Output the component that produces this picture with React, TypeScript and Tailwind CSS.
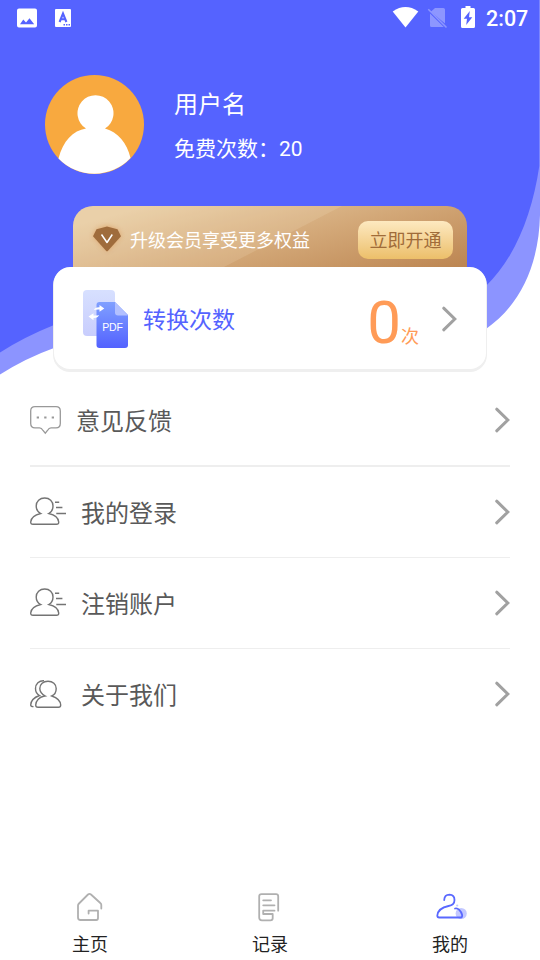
import type { ReactNode } from "react";

function HeaderBackground() {
  return (
    <svg className="absolute left-0 top-0 -z-10" width="540" height="376" viewBox="0 0 540 376" fill="none">
      <path d="M0 0H540V215C539 262 522 304 486 329C400 388 260 270 54 348Q26 358 0 374.500Z" fill="#8c94ff" />
      <path d="M0 0H539.300V166C532 216 514 259 486 286C400 350 250 250 54 325Q24 337 0 352.500Z" fill="#5563ff" />
    </svg>
  );
}

function StatusBar() {
  return (
    <div className="flex h-9 items-center text-white">
      <svg width="540" height="36" viewBox="0 0 540 36" className="-mr-[54px] shrink-0" fill="none">
        <path fillRule="evenodd" d="M19 8.500H35Q37 8.500 37 10.500V25.500Q37 27.500 35 27.500H19Q17 27.500 17 25.500V10.500Q17 8.500 19 8.500ZM20 24.200H34.200L29.500 18.200L26 22.500L23.300 19.600Z" fill="white" />
        <path d="M56 9H70Q71 9 71 10V26Q71 27 70 27H56Q55 27 55 26V10Q55 9 56 9Z" fill="white" />
        <path d="M59.600 22L63 13.500L66.400 22M60.700 19.300H65.300" stroke="#5563ff" strokeWidth="2.100" />
        <path d="M63.500 24.800H70" stroke="#5563ff" strokeWidth="1.400" strokeDasharray="1.500 1" />
        <path d="M392.700 11.500Q405.500 2.700 418.300 11.500L405.500 27.600Z" fill="white" />
        <path d="M435 8H443.300Q445 8 445 9.500V23.500L430.800 11.700ZM430 13.500L443.800 27H431.500Q430 27 430 25.500Z" fill="#8d96ff" />
        <path d="M428.300 9.200L446.500 27.500" stroke="#8d96ff" strokeWidth="1.500" />
        <path d="M465.500 6H470.500V8H473.500Q475 8 475 9.500V26.500Q475 28 473.500 28H462.500Q461 28 461 26.500V9.500Q461 8 462.500 8H465.500Z" fill="white" />
        <path d="M469.800 11L463.700 18.700H467L466.200 25L472.300 17.300H469Z" fill="#5563ff" />
      </svg>
      <span className="pt-0.5 font-[Roboto] text-[21.500px] font-medium leading-none">2:07</span>
    </div>
  );
}

function Avatar() {
  return (
    <svg width="99" height="99" viewBox="0 0 99 99" className="shrink-0">
      <circle cx="49.500" cy="49.500" r="49.500" fill="#f8a93f" />
      <path d="M13.500 83.500C18 66 28 55.500 41 53.500A18 18 0 1 1 60 53.500C73 57 82 68 85.500 83A49.500 49.500 0 0 1 13.500 83.500Z" fill="white" />
    </svg>
  );
}

function DiamondIcon() {
  return (
    <svg width="36" height="36" viewBox="0 0 36 36" className="shrink-0">
      <defs>
        <filter id="glow" x="-30%" y="-30%" width="160%" height="160%">
          <feGaussianBlur stdDeviation="2.5" />
        </filter>
      </defs>
      <path d="M4 14L8 7L18 4L28 7L32 14L18 29Z" fill="#d98e4c" opacity="0.6" filter="url(#glow)" />
      <path d="M7.500 7.300Q12 6 18 4.500Q24 6 28.500 7.300L32 14.200L19 28.700Q18 29.700 17 28.700L4 14.200Z" fill="#9f6c3c" />
      <path d="M12.500 12.500L18 20.500L23.300 12.500" fill="none" stroke="white" strokeWidth="1.500" strokeLinejoin="round" />
    </svg>
  );
}

function PdfIcon() {
  return (
    <svg width="46" height="58" viewBox="0 0 46 58" className="shrink-0" fill="none">
      <defs>
        <linearGradient id="pageBack" x1="0" y1="0" x2="0" y2="1">
          <stop stopColor="#d7e0ff" />
          <stop offset="1" stopColor="#c8cdfd" />
        </linearGradient>
        <linearGradient id="pageFront" x1="0" y1="0" x2="0" y2="1">
          <stop stopColor="#80a0ff" />
          <stop offset="1" stopColor="#5362ff" />
        </linearGradient>
      </defs>
      <rect width="32" height="46" rx="4" fill="url(#pageBack)" />
      <path d="M16.500 12H32L45 25V55Q45 58 42 58H16.500Q13.500 58 13.500 55V15Q13.500 12 16.500 12Z" fill="url(#pageFront)" />
      <path d="M32 12L45 25.500H35Q32 25.500 32 22.500Z" fill="#b2c0ff" />
      <path d="M11 20Q12 17 16.500 17.200V15L21.300 18.500L16.500 21.800V19.500Q13 19.300 11 20Z" fill="white" />
      <path d="M16 25Q15 28.200 10.500 28V30.300L5.500 26.500L10.500 23.200V25.500Q14 25.800 16 25Z" fill="white" />
      <text x="19.300" y="41.300" fill="white" fontSize="10.500" fontFamily="Liberation Sans, Arial, sans-serif" textLength="20.500">PDF</text>
    </svg>
  );
}

function Chevron() {
  return (
    <svg width="16" height="26" viewBox="0 0 16 26" fill="none" className="shrink-0">
      <path d="M2.700 2.200L13.800 13L2.700 23.800" stroke="#a1a1a1" strokeWidth="3" strokeLinecap="round" />
    </svg>
  );
}

function MessageIcon() {
  return (
    <svg width="31" height="30" viewBox="0 0 31 30" fill="none" className="shrink-0">
      <path d="M5 1.700H26Q30.300 1.700 30.300 6V18.500Q30.300 22.800 26 22.800H21Q19 22.800 17.500 25.500L15.300 28.200L13 25.500Q11.500 22.800 9.500 22.800H5Q.7 22.800 .7 18.500V6Q.7 1.700 5 1.700Z" stroke="#999" strokeWidth="1.300" />
      <path d="M6.700 12.500H9M14.200 12.500H16.500M21.700 12.500H24" stroke="#999" strokeWidth="2.200" />
    </svg>
  );
}

const personPath =
  "M10.700 16.500C7.500 14.800 6.200 12 6.200 9C6.200 4.300 9.800 1 14.700 1S23 4.300 23 9C23 12 21.500 15 18.800 16.500C25 18 28.500 21 28.700 25Q28.800 27.300 26.500 27.300H3Q.6 27.300 .7 25C1 21 4.500 18 10.700 16.500Z";

function LoginIcon() {
  return (
    <svg width="36" height="28" viewBox="0 0 36 28" fill="none" stroke="#747474" strokeWidth="1.400" className="-mt-0.5 shrink-0">
      <path d={personPath} />
      <path d="M25 5.300H29.200M26 10.500H32.400M26.300 16.500H36" />
    </svg>
  );
}

function PeopleIcon() {
  return (
    <svg width="32" height="28" viewBox="0 0 32 28" fill="none" stroke="#747474" strokeWidth="1.400" className="shrink-0">
      <path d="M15.300 16C11.500 14 9.800 11.500 9.800 8.500C9.800 4.200 13.200 1.200 18 1.200S26.200 4.200 26.200 8.500C26.200 12 24.500 14.800 21.800 16C27.500 18 30.500 21 30.700 25Q30.700 27.200 28.500 27.200H8Q5.700 27.200 5.700 25C5.900 20.500 9.500 17 13.700 16.300Z" />
      <path d="M14 .8C9 .5 5.500 4 5.500 8.500C5.500 11.500 7 14.200 9.500 15.500C4 17.500.8 21 .7 25Q.7 26.600 3.500 26.600" />
    </svg>
  );
}

function HomeIcon() {
  return (
    <svg width="30" height="32" viewBox="0 0 30 32" fill="none" stroke="#b0b0b0" strokeWidth="1.800" strokeLinecap="round" strokeLinejoin="round">
      <path d="M26.300 17.500V13.800Q26.300 12.800 25.300 12L16 3.500Q14.500 2.400 13 3.500L4 12.500Q3 13.500 3 14.500V26.500Q3 29 5.500 29H21.300Q23 29 23 27V19.700H13.600V22.500" />
    </svg>
  );
}

function RecordIcon() {
  return (
    <svg width="30" height="32" viewBox="0 0 30 32" fill="none" stroke="#b0b0b0" strokeWidth="1.800" strokeLinecap="round" strokeLinejoin="round">
      <path d="M23.200 19.700V5.300Q23.200 3.100 21 3.100H6.500Q4.200 3.100 4.200 5.300V26.500Q4.200 29.300 7 29.300H15.500Q17.700 29.300 17.700 27.300V23H8.200V19.700H19.500M8.200 9.300H16M8.200 14.300H19.500" />
    </svg>
  );
}

function MineIcon() {
  return (
    <svg width="34" height="32" viewBox="0 0 34 32" fill="none" strokeLinecap="round" strokeLinejoin="round" className="translate-x-[1px]">
      <circle cx="27.200" cy="22.500" r="5.600" fill="#c3c8ff" />
      <circle cx="23.200" cy="14.500" r="1.100" fill="#c3c8ff" />
      <path d="M10.200 9Q10.500 3.700 15.500 3.700Q20.500 3.900 20.500 9Q20.500 14 14.500 15C7 16.500 3.800 20 3.300 24.500Q3.300 26.500 5.200 26.500H26.500Q28.700 26.500 28 23.500C27 20 24 16.500 21 17.500" stroke="#5968ff" strokeWidth="1.800" />
    </svg>
  );
}

const menu: { label: string; icon: ReactNode; gap: string; border: string }[] = [
  { label: "意见反馈", icon: <MessageIcon />, gap: "gap-[15px]", border: "h-[92px] border-b-2" },
  { label: "我的登录", icon: <LoginIcon />, gap: "gap-[15px]", border: "h-[91px] border-b" },
  { label: "注销账户", icon: <LoginIcon />, gap: "gap-[15px]", border: "h-[91px] border-b" },
  { label: "关于我们", icon: <PeopleIcon />, gap: "gap-[19px]", border: "h-[90px]" },
];

const tabs: { label: string; icon: ReactNode }[] = [
  { label: "主页", icon: <HomeIcon /> },
  { label: "记录", icon: <RecordIcon /> },
  { label: "我的", icon: <MineIcon /> },
];

export default function App() {
  return (
    <div className="relative isolate flex h-[960px] w-[540px] flex-col overflow-hidden bg-white font-[Roboto,'Noto_Sans_CJK_SC',sans-serif]">
      <HeaderBackground />
      <StatusBar />

      {/* Profile */}
      <div className="mt-[39px] flex h-[99px] shrink-0 items-center gap-[30px] pl-[45px] text-white">
        <Avatar />
        <div className="flex flex-col gap-2 pt-1">
          <div className="text-2xl leading-9">用户名</div>
          <div className="text-[21px] leading-9">免费次数：20</div>
        </div>
      </div>

      {/* VIP banner */}
      <div className="relative mx-[73px] mt-8 flex h-[61px] w-[394px] shrink-0 items-center overflow-hidden rounded-t-[20px] bg-linear-[165deg,#e7cba2_12%,#d3a878_55%,#bc8551] pl-4 pr-3.5 pt-1.5">
        <svg className="absolute left-0 top-0" width="394" height="61" viewBox="0 0 394 61">
          <path d="M0 0H269L151 61H0Z" fill="#fff1d4" opacity="0.14" />
        </svg>
        <div className="relative flex w-full items-center">
          <DiamondIcon />
          <span className="ml-[5px] pt-[3px] text-lg text-white">升级会员享受更多权益</span>
          <button className="ml-auto h-[38px] w-[95px] rounded-[10px] bg-linear-to-b from-[#fde9c0] to-[#ecbf69] pt-[3px] text-lg text-[#a06c39]">立即开通</button>
        </div>
      </div>

      {/* Conversion count */}
      <div className="mx-[54px] flex h-[102px] shrink-0 items-center rounded-2xl bg-white px-[29px] pt-0.5 shadow-[0_2px_0_1px_#efefef]">
        <PdfIcon />
        <span className="ml-3.5 pt-[5px] text-[23px] text-[#5563ff]">转换次数</span>
        <div className="ml-auto flex items-baseline pt-[7px] text-[#ff9b57]">
          <span className="text-[60px] leading-none">0</span>
          <span className="text-lg">次</span>
        </div>
        <div className="ml-[22px]">
          <Chevron />
        </div>
      </div>

      {/* Menu */}
      <div className="mt-1.5 px-[30px]">
        {menu.map((m) => (
          <div key={m.label} className={`flex items-center border-[#eee] ${m.gap} ${m.border}`}>
            {m.icon}
            <span className="pt-[3px] text-2xl text-[#595959]">{m.label}</span>
            <div className="ml-auto">
              <Chevron />
            </div>
          </div>
        ))}
      </div>

      {/* Tab bar */}
      <div className="mt-auto grid h-[69px] grid-cols-3">
        {tabs.map((t) => (
          <div key={t.label} className="flex flex-col items-center gap-2">
            {t.icon}
            <span className="text-lg leading-7 text-[#222]">{t.label}</span>
          </div>
        ))}
      </div>
    </div>
  );
}
